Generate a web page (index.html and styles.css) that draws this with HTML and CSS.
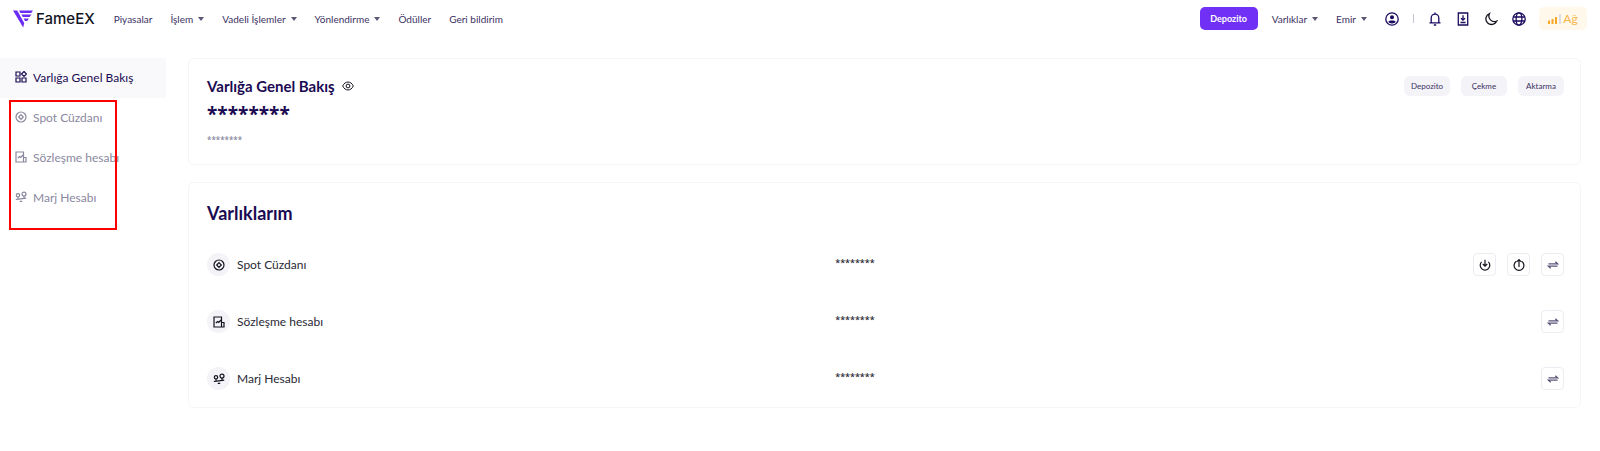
FILE: index.html
```
<!DOCTYPE html>
<html lang="tr">
<head>
  <meta charset="UTF-8" />
  <meta name="viewport" content="width=device-width, initial-scale=1.0"/>
  <title>FameEX</title>
  <link rel="stylesheet" href="styles.css">
</head>
<body>

  <!-- Shared icons -->
  <svg class="sprite" aria-hidden="true">
    <symbol id="i-grid" viewBox="0 0 12 12">
      <path d="M1 1h4v4H1zM1 7h4v4H1zM7 7h4v4H7zM9 .5 11.5 3 9 5.500 6.500 3z"/>
    </symbol>
    <symbol id="i-spot" viewBox="0 0 12 12">
      <circle cx="6" cy="6" r="5"/>
      <path d="M6 3.700 8.300 6 6 8.300 3.700 6z"/>
    </symbol>
    <symbol id="i-contract" viewBox="0 0 12 12">
      <path d="M8.500 11H1V1h7.500v10H11V6.500H8.500M2.800 7.200l1.700-1.700 1.200 1L8 4"/>
    </symbol>
    <symbol id="i-margin" viewBox="0 0 12 12">
      <circle cx="3" cy="4.300" r="1.700"/>
      <circle cx="9" cy="3.100" r="2"/>
      <path d="M.8 8.500l3-.3 7.400-1M3 6v2M9 5.100V7M4.800 10.500h2.400M6 9.500v1"/>
    </symbol>
    <symbol id="i-transfer" viewBox="0 0 12 12">
      <path d="M1.500 4.800h9L8.300 2.800M10.500 7.200h-9l2.200 2"/>
    </symbol>
  </svg>

  <!-- Top bar -->
  <header class="topbar">
    <a class="logo" href="#">
      <svg class="logo-mark" viewBox="0 0 20 18" aria-hidden="true">
        <path d="M0 .5h4.200l7 12.500-1 4.500z"/>
        <path d="M6 .5h14l-1.800 2.500H7.400zM8.400 4.500h10L16.600 7H9.800zM10.600 8.500h5.200L14.200 11h-2.200z"/>
      </svg>
      <span>FameEX</span>
    </a>
    <nav class="menu">
      <a href="#">Piyasalar</a>
      <a href="#" class="drop">İşlem</a>
      <a href="#" class="drop">Vadeli İşlemler</a>
      <a href="#" class="drop">Yönlendirme</a>
      <a href="#">Ödüller</a>
      <a href="#">Geri bildirim</a>
    </nav>
    <div class="tools">
      <button class="deposit">Depozito</button>
      <a href="#" class="drop">Varlıklar</a>
      <a href="#" class="drop">Emir</a>
      <div class="tool-icons">
        <button class="tool" aria-label="Hesap">
          <svg viewBox="0 0 14 14"><circle cx="7" cy="7" r="6.200"/><circle class="solid" cx="7" cy="5.300" r="2"/><path class="solid" d="M3.200 9.800C4.500 8.200 9.500 8.200 10.800 9.800 9.500 12 4.500 12 3.200 9.800z"/></svg>
        </button>
        <span class="divider"></span>
        <button class="tool" aria-label="Bildirimler">
          <svg viewBox="0 0 14 14"><path d="M3.200 10.500V6a3.800 3.800 0 0 1 7.600 0v4.500M1.500 10.800h11M7 .6v1.500M5.800 13h2.400"/></svg>
        </button>
        <button class="tool" aria-label="İndir">
          <svg viewBox="0 0 14 14"><path d="M2.300 1h9.400v12H2.300zM7 3.300V8M5 6.200l2 2 2-2M4.500 10.500h5"/></svg>
        </button>
        <button class="tool dark" aria-label="Tema">
          <svg viewBox="0 0 14 14"><path d="M5.500 1.500a5.700 5.700 0 1 0 7.300 7.600A5.600 5.600 0 0 1 5.500 1.500z"/></svg>
        </button>
        <button class="tool" aria-label="Dil">
          <svg viewBox="0 0 14 14"><circle cx="7" cy="7" r="6.200"/><ellipse cx="7" cy="7" rx="2.900" ry="6.200"/><path d="M1.200 5h11.600M1.200 9h11.600"/></svg>
        </button>
      </div>
      <button class="network">
        <svg viewBox="0 0 14 10" aria-hidden="true"><path d="M0 6.500h2V10H0zM3.500 5h2v5h-2zM7 3h2v7H7z"/><path class="off" d="M11 0h2v10h-2z"/></svg>Ağ
      </button>
    </div>
  </header>

  <div class="layout">
    <!-- Sidebar -->
    <aside class="sidebar">
      <a href="#" class="side-item active"><svg class="icon"><use href="#i-grid"/></svg>Varlığa Genel Bakış</a>
      <a href="#" class="side-item"><svg class="icon"><use href="#i-spot"/></svg>Spot Cüzdanı</a>
      <a href="#" class="side-item"><svg class="icon"><use href="#i-contract"/></svg>Sözleşme hesabı</a>
      <a href="#" class="side-item"><svg class="icon"><use href="#i-margin"/></svg>Marj Hesabı</a>
      <div class="marker"></div>
    </aside>

    <main class="content">
      <!-- Overview -->
      <section class="card overview">
        <div>
          <h1>Varlığa Genel Bakış
            <button class="eye" aria-label="Göster"><svg viewBox="0 0 12 10"><path d="M.7 5C3-.3 9-.3 11.300 5 9 10.300 3 10.300.7 5z"/><circle cx="6" cy="5" r="1.900"/></svg></button>
          </h1>
          <p class="total">********</p>
          <p class="total-sub">********</p>
        </div>
        <div class="actions">
          <button>Depozito</button>
          <button>Çekme</button>
          <button>Aktarma</button>
        </div>
      </section>

      <!-- Accounts -->
      <section class="card accounts">
        <h2>Varlıklarım</h2>
        <div class="row">
          <div class="name"><span class="badge"><svg class="icon"><use href="#i-spot"/></svg></span>Spot Cüzdanı</div>
          <div class="amount">********</div>
          <div class="row-actions">
            <button aria-label="Depozito"><svg class="icon" viewBox="0 0 12 12"><path d="M2.600 2.900a4.800 4.800 0 1 0 6.800 0M6 .8v6M3.800 5 6 7.200 8.200 5"/></svg></button>
            <button aria-label="Çekme"><svg class="icon" viewBox="0 0 12 12"><path d="M3.500 2.200a4.900 4.900 0 1 0 5 0M6 8V.8M4 2.600 6 .6l2 2"/></svg></button>
            <button class="swap" aria-label="Aktarma"><svg class="icon"><use href="#i-transfer"/></svg></button>
          </div>
        </div>
        <div class="row">
          <div class="name"><span class="badge"><svg class="icon"><use href="#i-contract"/></svg></span>Sözleşme hesabı</div>
          <div class="amount">********</div>
          <div class="row-actions">
            <button class="swap" aria-label="Aktarma"><svg class="icon"><use href="#i-transfer"/></svg></button>
          </div>
        </div>
        <div class="row">
          <div class="name"><span class="badge"><svg class="icon"><use href="#i-margin"/></svg></span>Marj Hesabı</div>
          <div class="amount">********</div>
          <div class="row-actions">
            <button class="swap" aria-label="Aktarma"><svg class="icon"><use href="#i-transfer"/></svg></button>
          </div>
        </div>
      </section>
    </main>
  </div>

</body>
</html>
```
FILE: styles.css
```
* {
  box-sizing: border-box;
}

body {
  margin: 0;
  font-family: Lato, sans-serif;
  font-size: 12px;
  color: #1a0a52;
  background: #fff;
}

a {
  color: inherit;
  text-decoration: none;
}

button {
  padding: 0;
  border: none;
  background: none;
  font-family: inherit;
  color: inherit;
  cursor: pointer;
}

svg {
  display: block;
  fill: none;
  stroke: currentColor;
}

h1, h2, p {
  margin: 0;
}

.sprite {
  position: absolute;
  width: 0;
  height: 0;
}

.icon {
  width: 12px;
  height: 12px;
  flex: none;
  stroke-width: 1.2;
}

/* Top bar */
.topbar {
  display: flex;
  align-items: center;
  height: 37px;
  padding: 0 13px;
  font-size: 10px;
  color: #3b3163;
}

.logo {
  display: flex;
  align-items: center;
  gap: 3px;
  margin-right: 19px;
  font-family: Inter, sans-serif;
  font-size: 15px;
  font-weight: 500;
  color: #14141f;
}

.logo-mark {
  width: 20px;
  height: 18px;
  fill: #6b2cf5;
  stroke: none;
}

.menu,
.tools,
.tool-icons {
  display: flex;
  align-items: center;
}

.menu {
  gap: 18px;
}

.tools {
  margin-left: auto;
}

.drop {
  display: flex;
  align-items: center;
  gap: 5px;
}

.drop::after {
  content: "";
  border: 3px solid transparent;
  border-top: 4px solid #5c5775;
  border-bottom: none;
}

.deposit {
  width: 58px;
  height: 23px;
  margin-right: 14px;
  border-radius: 5px;
  background: #7130f5;
  color: #fff;
  font-size: 9px;
  font-weight: 700;
}

.tools .drop {
  margin-right: 18px;
}

.tool-icons {
  gap: 14px;
  margin-right: 13px;
}

.tool {
  color: #1b0a5e;
}

.tool.dark {
  color: #14141f;
}

.tool svg {
  width: 14px;
  height: 14px;
  stroke-width: 1.3;
}

.tool .solid {
  fill: currentColor;
  stroke: none;
}

.divider {
  width: 1px;
  height: 9px;
  background: #c4c4d0;
}

.network {
  display: flex;
  align-items: center;
  justify-content: center;
  gap: 1px;
  width: 48px;
  height: 23px;
  border-radius: 5px;
  background: #fff8eb;
  color: #f9b54c;
  font-size: 12px;
}

.network svg {
  width: 14px;
  height: 10px;
  fill: #f9a826;
  stroke: none;
}

.network .off {
  fill: #dcdce4;
}

/* Layout */
.layout {
  display: flex;
  gap: 22px;
  padding: 21px 19px 0 0;
}

.sidebar {
  position: relative;
  flex: none;
  width: 166px;
}

.side-item {
  display: flex;
  align-items: center;
  gap: 6px;
  height: 40px;
  padding: 0 0 2px 15px;
  color: #8a88a0;
}

.side-item.active {
  background: #f9f9fb;
  color: #1a0a52;
}

/* Highlight frame over the account links */
.marker {
  position: absolute;
  top: 42px;
  left: 9px;
  width: 108px;
  height: 130px;
  border: 2px solid #f00;
}

.content {
  flex: 1;
}

.card {
  border: 1px solid #f5f5f8;
  border-radius: 6px;
}

/* Overview */
.overview {
  display: flex;
  justify-content: space-between;
  align-items: flex-start;
  margin-bottom: 17px;
  padding: 17px 16px 16px 18px;
}

h1 {
  display: flex;
  align-items: center;
  gap: 7px;
  font-size: 15px;
  line-height: 20px;
  font-weight: 700;
}

.eye svg {
  width: 12px;
  height: 10px;
  color: #14141f;
}

.total,
.total-sub,
.amount {
  font-family: "Open Sans", sans-serif;
}

.total {
  font-size: 19px;
  line-height: 36px;
  font-weight: 700;
}

.total-sub {
  font-size: 8px;
  line-height: 16px;
  font-weight: 600;
  color: #8a88a0;
}

.actions {
  display: flex;
  gap: 11px;
}

.actions button {
  width: 46px;
  height: 20px;
  border-radius: 6px;
  background: #f3f3f8;
  color: #3b3163;
  font-size: 8px;
}

/* Accounts */
.accounts {
  padding: 18px 16px 0 18px;
}

h2 {
  margin-bottom: 11px;
  font-size: 18px;
  line-height: 24px;
  font-weight: 700;
}

.row {
  display: grid;
  grid-template-columns: 46% 1fr auto;
  align-items: center;
  height: 57px;
  color: #2a2a35;
}

.name {
  display: flex;
  align-items: center;
  gap: 7px;
}

.badge {
  display: flex;
  align-items: center;
  justify-content: center;
  width: 23px;
  height: 23px;
  border-radius: 50%;
  background: #f3f3f8;
  color: #14141f;
}

.amount {
  padding: 0 0 4px 4px;
  font-size: 9px;
  font-weight: 600;
}

.row-actions {
  display: flex;
  gap: 11px;
}

.row-actions button {
  display: flex;
  align-items: center;
  justify-content: center;
  width: 23px;
  height: 23px;
  border: 1px solid #ececf3;
  border-radius: 4px;
  color: #14141f;
}

.row-actions .swap {
  color: #5a5378;
}
```
